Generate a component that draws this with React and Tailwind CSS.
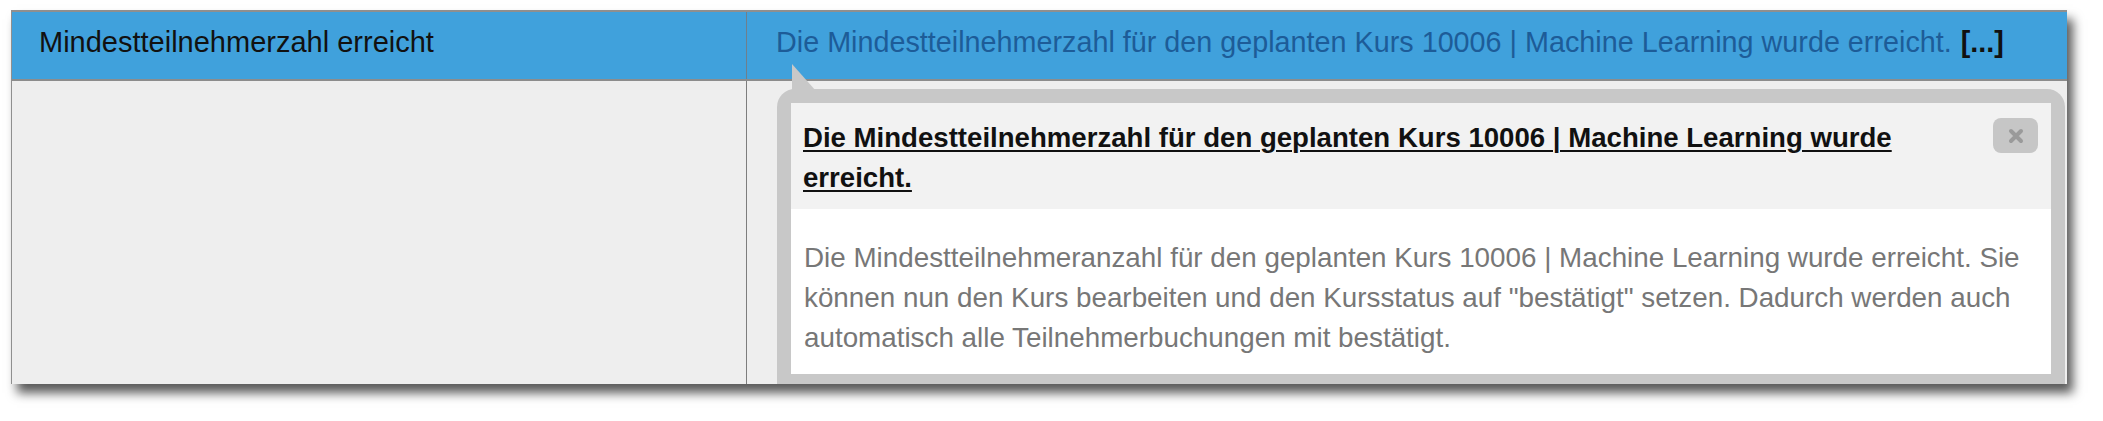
import React from 'react';

const font = { fontFamily: '"Liberation Sans", Arial, Helvetica, sans-serif' };

const titleText =
  'Die Mindestteilnehmerzahl für den geplanten Kurs 10006 | Machine Learning wurde erreicht.';
const bodyText =
  'Die Mindestteilnehmeranzahl für den geplanten Kurs 10006 | Machine Learning wurde erreicht. Sie können nun den Kurs bearbeiten und den Kursstatus auf "bestätigt" setzen. Dadurch werden auch automatisch alle Teilnehmerbuchungen mit bestätigt.';

function Popover() {
  return (
    <div className="absolute left-[765px] top-[77px] w-[1288px]">
      {/* arrow pointing up to the cell text */}
      <svg
        className="absolute left-[15px] top-[-25px]"
        width="24"
        height="27"
        viewBox="0 0 24 27"
      >
        <polygon points="0,0 0,27 24,27" fill="#c8c8c8" />
      </svg>
      <div className="rounded-t-[18px] bg-[#c8c8c8] p-[14px] pb-[12px]">
        <div className="relative bg-[#f2f2f2] pl-[12px] pr-[96px] pt-[15px] pb-[11px]">
          <h3 className="text-[27.6px] font-bold leading-[40px] text-[#111] underline decoration-[2px] underline-offset-[3px]">
            {titleText}
          </h3>
          <button className="absolute right-[13px] top-[15px] flex h-[35px] w-[45px] items-center justify-center rounded-[8px] bg-[#c6c6c6] text-[#9a9a9a]">
            <svg width="16" height="16" viewBox="0 0 16 16">
              <path d="M3 3 L13 13 M13 3 L3 13" stroke="currentColor" strokeWidth="4" strokeLinecap="round" />
            </svg>
          </button>
        </div>
        <div className="bg-white pl-[13px] pr-[14px] pt-[29px] pb-[16px]">
          <p className="text-[27.8px] leading-[40px] text-[#777]">{bodyText}</p>
        </div>
      </div>
    </div>
  );
}

export default function App() {
  return (
    <div className="h-[421px] w-[2103px] bg-white pl-[11px] pt-[10px]" style={font}>
      <div className="relative h-[374px] w-[2056px] overflow-hidden border-t-2 border-l border-[#8f8f8f] bg-[#eeeeee] shadow-[6px_9px_10px_rgba(0,0,0,0.65)]">
        <div className="flex h-[69px] border-b-2 border-[#8c8c8c] bg-[#40a1dc]">
          <div className="flex w-[734px] items-center pb-[5px] pl-[27px] text-[29px] text-[#111]">
            Mindestteilnehmerzahl erreicht
          </div>
          <div className="flex flex-1 items-center border-l border-[#6f7f8c] pb-[5px] pl-[29px] text-[28.75px] whitespace-nowrap">
            <span className="text-[#1d5c98]">{titleText}</span>
            <span className="ml-[9px] font-bold text-[#111]">[...]</span>
          </div>
        </div>
        <div className="flex h-[303px]">
          <div className="w-[734px] bg-[#eeeeee]" />
          <div className="flex-1 border-l border-[#7d7d7d] bg-[#eeeeee]" />
        </div>
        <Popover />
      </div>
    </div>
  );
}
